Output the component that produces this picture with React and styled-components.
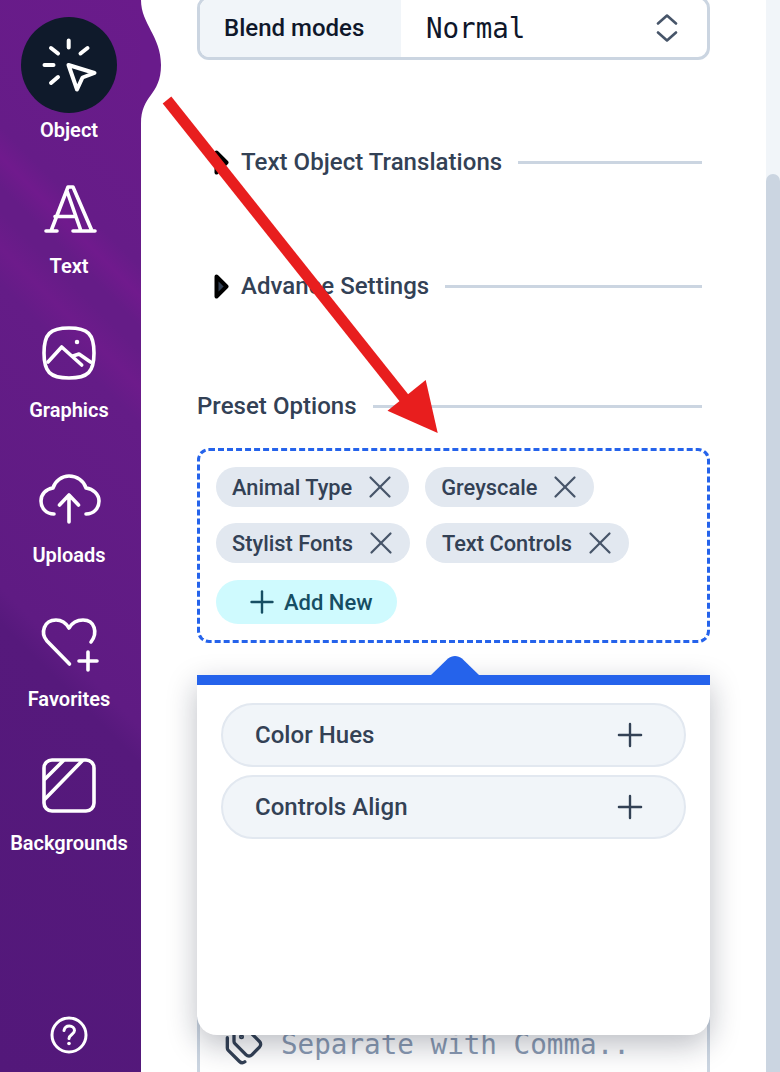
import React from 'react';
import styled, { createGlobalStyle } from 'styled-components';
import { Plus, X, Tags } from 'lucide-react';

const Global = createGlobalStyle`
  html, body { margin: 0; padding: 0; height: 1072px; overflow: hidden; background: #fff; }
  * { box-sizing: border-box; }
  body { font-family: Roboto, "Noto Sans", sans-serif; }
`;

const Page = styled.div`
  position: relative;
  display: flex;
  width: 780px;
  height: 1072px;
  overflow: hidden;
`;

const Sidebar = styled.nav`
  position: relative;
  flex: 0 0 141px;
  display: flex;
  flex-direction: column;
  padding: 17px 3px 18px 0;
  background: linear-gradient(45deg, #53187a 0, #56197c 37%, #5f1b83 40%, #641c87 65%, #6d1b8b 68%, #651c87 71%, #651c87 73%, #701a8d 75.500%, #661c88 78%, #6a1b8b 100%);
`;

const Wave = styled.svg`
  position: absolute;
  top: 0;
  left: 141px;
  width: 20px;
  height: 124px;
`;

const NavItem = styled.div`
  height: ${p => p.$height}px;
  display: flex;
  flex-direction: column;
  align-items: center;
`;

const IconBox = styled.div`
  width: ${p => (p.$active ? 96 : 64)}px;
  height: ${p => (p.$active ? 96 : 64)}px;
  border-radius: 50%;
  background: ${p => (p.$active ? '#0f1a2b' : 'transparent')};
  display: flex;
  align-items: center;
  justify-content: center;
  svg { display: block; fill: none; stroke: #fff; stroke-width: ${p => (p.$active ? 4 : 3.6)}; stroke-linecap: round; stroke-linejoin: round; }
`;

const NavLabel = styled.span`
  margin-top: ${p => (p.$active ? 5 : 13)}px;
  font-size: 20px;
  line-height: 24px;
  font-weight: 600;
  color: #fff;
  white-space: nowrap;
`;

const Help = styled.div`
  margin-top: auto;
  display: flex;
  justify-content: center;
  svg { display: block; fill: none; stroke: #fff; stroke-width: 3; stroke-linecap: round; stroke-linejoin: round; }
`;

const Main = styled.main`
  position: relative;
  flex: 1;
  padding: 0 56px;
  overflow: hidden;
`;

const BlendRow = styled.div`
  display: flex;
  height: 64px;
  margin-top: -4px;
  border: 3px solid #cbd5e1;
  border-radius: 12px;
  overflow: hidden;
`;

const BlendLabel = styled.div`
  flex: 0 0 201px;
  padding-left: 24px;
  display: flex;
  align-items: center;
  background: #f1f5f9;
  font-size: 24px;
  font-weight: 500;
  color: #0f172a;
`;

const BlendValue = styled.div`
  flex: 1;
  padding: 0 29px 0 25px;
  display: flex;
  align-items: center;
  justify-content: space-between;
  font-family: "DejaVu Sans Mono", "Liberation Mono", monospace;
  font-size: 27.5px;
  color: #0f172a;
  svg { display: block; fill: none; stroke: #475569; stroke-width: 2.6; stroke-linecap: round; stroke-linejoin: round; }
`;

const Section = styled.div`
  display: flex;
  align-items: center;
  height: 32px;
  margin-top: ${p => p.$gap}px;
  padding-left: ${p => (p.$marker ? 17 : 0)}px;
  padding-right: 8px;
`;

const Marker = styled.svg`
  flex: 0 0 15px;
  width: 15px;
  height: 25px;
  margin-right: 12px;
`;

const SectionTitle = styled.span`
  font-size: 24px;
  font-weight: 500;
  letter-spacing: 0.04px;
  color: #334155;
  white-space: nowrap;
`;

const Rule = styled.span`
  flex: 1;
  height: 3px;
  margin-left: 16px;
  background: #cbd5e1;
`;

const PresetBox = styled.div`
  display: flex;
  flex-wrap: wrap;
  align-content: flex-start;
  gap: 16px;
  height: 195px;
  margin-top: 26px;
  padding: 16px;
  border: 3px dashed #2563eb;
  border-radius: 12px;
`;

const Chip = styled.div`
  display: flex;
  align-items: center;
  gap: 9px;
  height: 40px;
  padding: 0 10px 0 16px;
  border-radius: 20px;
  background: #e2e8f0;
  font-size: 21.8px;
  font-weight: 500;
  color: #334155;
  white-space: nowrap;
  svg { display: block; color: #475569; }
`;

const AddButton = styled.button`
  display: flex;
  align-items: center;
  gap: 4.500px;
  width: 181px;
  height: 44px;
  margin-top: 1px;
  padding: 0 0 0 27.500px;
  border: 0;
  border-radius: 22px;
  background: #cffafe;
  font-family: inherit;
  font-size: 22px;
  font-weight: 500;
  color: #164e63;
  white-space: nowrap;
  svg { display: block; }
`;

const TagInput = styled.div`
  display: flex;
  align-items: flex-start;
  gap: 17px;
  height: 140px;
  margin-top: 319px;
  padding: 61px 0 0 24px;
  border: 3px solid #cbd5e1;
  border-radius: 12px;
  font-family: "DejaVu Sans Mono", "Liberation Mono", monospace;
  font-size: 27.6px;
  line-height: 38px;
  color: #8a9bb3;
  white-space: nowrap;
  svg { display: block; flex: none; color: #334155; }
`;

const Popup = styled.div`
  position: absolute;
  top: 675px;
  left: 56px;
  right: 56px;
  height: 360px;
  display: flex;
  flex-direction: column;
  gap: 8px;
  padding: 18px 24px;
  background: #fff;
  border-top: 10px solid #2563eb;
  border-radius: 0 0 20px 20px;
  box-shadow: 0 10px 30px rgba(15, 23, 42, .28);
`;

const Caret = styled.svg`
  position: absolute;
  top: -30px;
  left: 233px;
  width: 50px;
  height: 21px;
`;

const Option = styled.div`
  display: flex;
  align-items: center;
  justify-content: space-between;
  height: 64px;
  padding: 0 35px 0 32px;
  border: 2px solid #e2e8f0;
  border-radius: 32px;
  background: #f1f5f9;
  font-size: 24px;
  font-weight: 500;
  letter-spacing: 0.04px;
  color: #334155;
  svg { display: block; }
`;

const Scrollbar = styled.div`
  flex: 0 0 14px;
  padding-top: 174px;
  background: #f1f5f9;
`;

const Thumb = styled.div`
  height: 100%;
  border-radius: 7px 7px 0 0;
  background: #cbd5e1;
`;

const ArrowOverlay = styled.svg`
  position: absolute;
  top: 0;
  left: 0;
  width: 780px;
  height: 1072px;
  pointer-events: none;
`;

const navItems = [
  {
    label: 'Object',
    active: true,
    height: 160,
    icon: (
      <svg width="96" height="96" viewBox="21 17 96 96">
        <path d="M68.700 40.500v7M51 48l7 5.500M87.500 48l-7 5.500M44.500 65h9M51 83l7-6" />
        <path d="M68.500 65l26 8-12 4.500-5.500 12z" />
      </svg>
    ),
  },
  {
    label: 'Text',
    height: 144,
    icon: (
      <svg width="64" height="64" viewBox="37 177 64 64">
        <path d="M46 231h11M73 231h22M51 231l17-44h5l19 44M67 191l14 40M55 216.500h21" />
      </svg>
    ),
  },
  {
    label: 'Graphics',
    height: 145,
    icon: (
      <svg width="64" height="64" viewBox="37 321 64 64">
        <path d="M69 328c19 0 25 6 25 25s-6 25-25 25-25-6-25-25 6-25 25-25z" />
        <path d="M48 362l13.700-15 20 18M73 356l6-2 11.500 8" />
        <path d="M77 342v.01" strokeWidth="4.500" />
      </svg>
    ),
  },
  {
    label: 'Uploads',
    height: 144,
    icon: (
      <svg width="64" height="64" viewBox="37 466 64 64">
        <path d="M54 514c-8 0-13-6-13-13 0-7 5-12 12-13 2-7 9-12 16-12 8 0 15 5 17 12 7 1 13 6 13 13s-5 13-13 13" />
        <path d="M69 522v-27M59.500 505l9.500-10 9.500 10" />
      </svg>
    ),
  },
  {
    label: 'Favorites',
    height: 144,
    icon: (
      <svg width="64" height="64" viewBox="37 610 64 64">
        <path d="M69.500 664L47 641c-7-8-3-21 9-21 6 0 10 3 13 8 3-5 7-8 14-8 12 0 15 13 8 22" />
        <path d="M88 652v18M79 661h18" />
      </svg>
    ),
  },
  {
    label: 'Backgrounds',
    height: 144,
    icon: (
      <svg width="64" height="64" viewBox="37 754 64 64">
        <rect x="44" y="760" width="50" height="51" rx="8" />
        <path d="M45 799l37-38M45 779l18-18" />
      </svg>
    ),
  },
];

const chips = ['Animal Type', 'Greyscale', 'Stylist Fonts', 'Text Controls'];
const options = ['Color Hues', 'Controls Align'];

const Triangle = () => (
  <Marker viewBox="0 0 15 25">
    <path d="M2.500 2.500L12.500 12.500 2.500 22.500z" fill="#334155" stroke="#000" strokeWidth="4" strokeLinejoin="round" />
  </Marker>
);

export default function App() {
  return (
    <Page>
      <Global />
      <Sidebar>
        {navItems.map(item => (
          <NavItem key={item.label} $height={item.height}>
            <IconBox $active={item.active}>{item.icon}</IconBox>
            <NavLabel $active={item.active}>{item.label}</NavLabel>
          </NavItem>
        ))}
        <Help>
          <svg width="38" height="38" viewBox="0 0 38 38">
            <circle cx="19" cy="19" r="17" />
            <path d="M14 14.500c.6-3 2.700-4.500 5.300-4.500 3 0 5.200 2 5.200 4.600 0 3.700-5.500 4-5.500 7.900" />
            <path d="M19 27.500v.01" strokeWidth="3.600" />
          </svg>
        </Help>
        <Wave viewBox="0 0 20 124">
          <path d="M0 0C0 24 20 36 20 65 20 96 0 94 0 124z" fill="#691b8b" />
        </Wave>
      </Sidebar>

      <Main>
        <BlendRow>
          <BlendLabel>Blend modes</BlendLabel>
          <BlendValue>
            Normal
            <svg width="22" height="28" viewBox="0 0 22 28">
              <path d="M2 9.500L11 1.500 20 9.500M2 18.500L11 26.500 20 18.500" />
            </svg>
          </BlendValue>
        </BlendRow>

        <Section $gap={86} $marker>
          <Triangle />
          <SectionTitle>Text Object Translations</SectionTitle>
          <Rule />
        </Section>
        <Section $gap={92} $marker>
          <Triangle />
          <SectionTitle>Advance Settings</SectionTitle>
          <Rule />
        </Section>
        <Section $gap={88}>
          <SectionTitle>Preset Options</SectionTitle>
          <Rule />
        </Section>

        <PresetBox>
          {chips.map(chip => (
            <Chip key={chip}>
              {chip}
              <X size={38} strokeWidth={1.400} />
            </Chip>
          ))}
          <AddButton>
            <Plus size={36} strokeWidth={1.600} />
            Add New
          </AddButton>
        </PresetBox>

        <TagInput>
          <Tags size={40} strokeWidth={2} />
          Separate with Comma..
        </TagInput>

        <Popup>
          <Caret viewBox="0 0 50 21">
            <path d="M0 21L18 3.500C22 0 28 0 32 3.500L50 21z" fill="#2563eb" />
          </Caret>
          {options.map(option => (
            <Option key={option}>
              {option}
              <Plus size={38} strokeWidth={1.500} />
            </Option>
          ))}
        </Popup>
      </Main>

      <Scrollbar>
        <Thumb />
      </Scrollbar>

      <ArrowOverlay viewBox="0 0 780 1072">
        <path d="M167 100L412 408" stroke="#e81e1e" strokeWidth="11" fill="none" />
        <path d="M425.700 380L387.500 410.700 437.700 433z" fill="#e81e1e" />
      </ArrowOverlay>
    </Page>
  );
}
